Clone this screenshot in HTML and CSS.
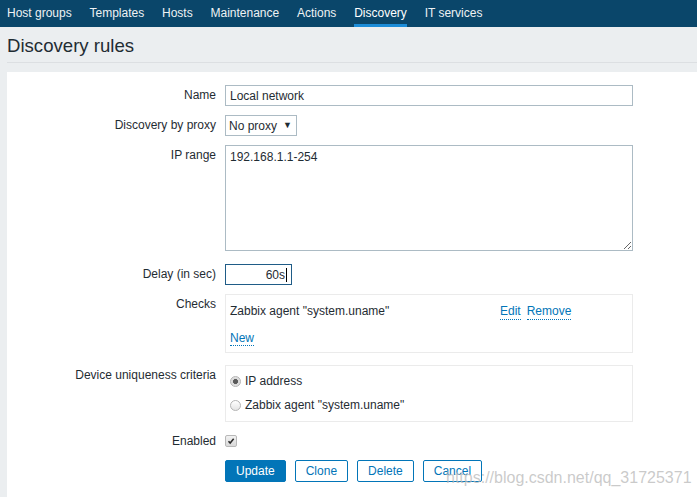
FILE: index.html
```html
<!DOCTYPE html>
<html lang="en">
<head>
<meta charset="utf-8">
<title>Discovery rules</title>
<link rel="stylesheet" href="styles.css">
</head>
<body>
<nav class="topnav">
  <a class="nav-item" href="#">Host groups</a>
  <a class="nav-item" href="#">Templates</a>
  <a class="nav-item" href="#">Hosts</a>
  <a class="nav-item" href="#">Maintenance</a>
  <a class="nav-item" href="#">Actions</a>
  <a class="nav-item active" href="#">Discovery</a>
  <a class="nav-item" href="#">IT services</a>
</nav>
<header class="page-header">
  <h1 class="page-title">Discovery rules</h1>
</header>
<main class="panel">
  <form class="form">
    <div class="row">
      <label class="label">Name</label>
      <div class="field"><input class="input input-wide" type="text" value="Local network"></div>
    </div>
    <div class="row">
      <label class="label">Discovery by proxy</label>
      <div class="field">
        <span class="select-wrap"><select class="select"><option>No proxy</option></select></span>
      </div>
    </div>
    <div class="row">
      <label class="label">IP range</label>
      <div class="field"><textarea class="textarea">192.168.1.1-254</textarea></div>
    </div>
    <div class="row row-delay">
      <label class="label">Delay (in sec)</label>
      <div class="field">
        <span class="delay-wrap"><input class="input input-delay" type="text" value="60s"><span class="caret"></span></span>
      </div>
    </div>
    <div class="row">
      <label class="label">Checks</label>
      <div class="field">
        <div class="box box-checks">
          <div class="check-row">
            <span class="check-name">Zabbix agent "system.uname"</span>
            <span class="check-actions"><a class="link" href="#">Edit</a><a class="link" href="#">Remove</a></span>
          </div>
          <div class="check-row">
            <a class="link" href="#">New</a>
          </div>
        </div>
      </div>
    </div>
    <div class="row row-device">
      <label class="label">Device uniqueness criteria</label>
      <div class="field">
        <div class="box box-radios">
          <label class="radio-row"><input class="radio" type="radio" name="uniq" checked>IP address</label>
          <label class="radio-row"><input class="radio" type="radio" name="uniq">Zabbix agent "system.uname"</label>
        </div>
      </div>
    </div>
    <div class="row">
      <label class="label">Enabled</label>
      <div class="field">
        <span class="checkbox"><svg viewBox="0 0 12 12" width="12" height="12"><path d="M3 6.2 L5 8.4 L9.2 3.2" fill="none" stroke="#2a2a2a" stroke-width="1.8"/></svg></span>
      </div>
    </div>
    <div class="row">
      <span class="label"></span>
      <div class="field buttons">
        <button class="btn btn-primary" type="button">Update</button>
        <button class="btn" type="button">Clone</button>
        <button class="btn" type="button">Delete</button>
        <button class="btn" type="button">Cancel</button>
      </div>
    </div>
  </form>
</main>
<div class="watermark">https://blog.csdn.net/qq_31725371</div>
</body>
</html>
```

FILE: styles.css
```css
html, body {
  margin: 0;
  padding: 0;
}
body {
  font-family: "Liberation Sans", Arial, sans-serif;
  font-size: 12px;
  color: #1f2c33;
  background: #ebeef0;
  height: 497px;
  overflow: hidden;
  position: relative;
}
.topnav {
  display: flex;
  gap: 17.8px;
  height: 27px;
  padding-left: 7px;
  background: #0a466a;
}
.nav-item {
  display: block;
  height: 27px;
  line-height: 26px;
  color: #eef2f4;
  text-decoration: none;
}
.nav-item.active {
  color: #ffffff;
  box-shadow: inset 0 -3px 0 #1b8cd8;
}
.page-header {
  margin-left: 7px;
  padding: 7px 0 4px;
  border-bottom: 1px solid #dcdfe2;
}
.page-title {
  margin: 0;
  font-size: 18.6px;
  font-weight: normal;
  line-height: 24px;
  color: #1f2c33;
}
.panel {
  margin: 9px 0 0 7px;
  background: #ffffff;
  padding: 13px 0 20px;
}
.form {
  display: flex;
  flex-direction: column;
  gap: 9px;
}
.row {
  display: grid;
  grid-template-columns: 209px 408px;
  column-gap: 9px;
  align-items: start;
}
.row-delay { margin-top: 4px; }
.row-device { margin-top: 3px; }
.label {
  text-align: right;
  line-height: 20px;
}
.field {
  line-height: 20px;
}
.input {
  box-sizing: border-box;
  height: 21px;
  border: 1px solid #acbbc4;
  padding: 0 4px;
  font: inherit;
  color: #1f2c33;
  background: #fff;
  outline: none;
  display: block;
}
.input-wide { width: 408px; }
.select-wrap {
  position: relative;
  display: inline-block;
  vertical-align: top;
}
.select-wrap::after {
  content: "\25BC";
  position: absolute;
  right: 5px;
  top: 0;
  line-height: 21px;
  font-size: 9px;
  color: #1f2c33;
  pointer-events: none;
}
.select {
  -webkit-appearance: none;
  appearance: none;
  box-sizing: border-box;
  width: 72px;
  height: 21px;
  border: 1px solid #acbbc4;
  border-radius: 0;
  padding: 0 18px 0 3px;
  font: inherit;
  color: #1f2c33;
  background: #fff;
  display: block;
}
.textarea {
  box-sizing: border-box;
  display: block;
  width: 408px;
  height: 106px;
  border: 1px solid #acbbc4;
  padding: 4px 4px;
  margin: 0;
  font: inherit;
  line-height: 14px;
  color: #1f2c33;
  resize: vertical;
}
.delay-wrap {
  position: relative;
  display: inline-block;
  vertical-align: top;
}
.input-delay {
  width: 67px;
  text-align: right;
  border-color: #1f5c87;
  padding-right: 6px;
}
.caret {
  position: absolute;
  right: 5px;
  top: 4px;
  width: 1px;
  height: 14px;
  background: #000;
}
.box {
  box-sizing: border-box;
  width: 408px;
  border: 1px solid #ebebeb;
}
.box-checks { padding: 4px 4px 5px; }
.box-radios { padding: 3px 4px 4px; }
.check-row {
  display: flex;
  line-height: 24px;
  height: 24px;
}
.check-name {
  width: 270px;
}
.check-actions {
  display: flex;
  gap: 6px;
}
.link {
  color: #0275b8;
  text-decoration: none;
  border-bottom: 1px dotted #0275b8;
  line-height: 16px;
  align-self: center;
}
.check-row > .link { margin-top: 5px; height: 15px; }
.radio-row {
  display: flex;
  align-items: center;
  height: 24px;
  line-height: 24px;
}
.radio {
  -webkit-appearance: none;
  appearance: none;
  box-sizing: border-box;
  width: 11px;
  height: 11px;
  margin: 0 4px 0 0;
  border: 1px solid #b4b4b4;
  border-radius: 50%;
  background: linear-gradient(#ffffff, #e4e4e4);
}
.radio:checked {
  background: radial-gradient(circle, #5a5a5a 0, #5a5a5a 2.2px, #d8d8d8 2.8px, #ececec 100%);
}
.checkbox {
  display: inline-block;
  box-sizing: border-box;
  width: 12px;
  height: 12px;
  margin-top: 4px;
  vertical-align: top;
  border: 1px solid #b8b8b8;
  border-radius: 2px;
  background: linear-gradient(#f2f2f2, #d9d9d9);
  line-height: 0;
}
.checkbox svg {
  width: 10px;
  height: 10px;
}
.buttons {
  display: flex;
  gap: 9px;
}
.btn {
  box-sizing: border-box;
  height: 22px;
  padding: 0 10px;
  border: 1px solid #0275b8;
  border-radius: 2px;
  background: #ffffff;
  color: #0275b8;
  font: inherit;
  line-height: 20px;
  cursor: pointer;
}
.btn-primary {
  background: #0275b8;
  color: #ffffff;
}
.watermark {
  position: absolute;
  left: 446px;
  top: 470px;
  font-size: 16px;
  line-height: 16px;
  color: rgba(185, 185, 185, 0.75);
  white-space: nowrap;
  pointer-events: none;
}
```
